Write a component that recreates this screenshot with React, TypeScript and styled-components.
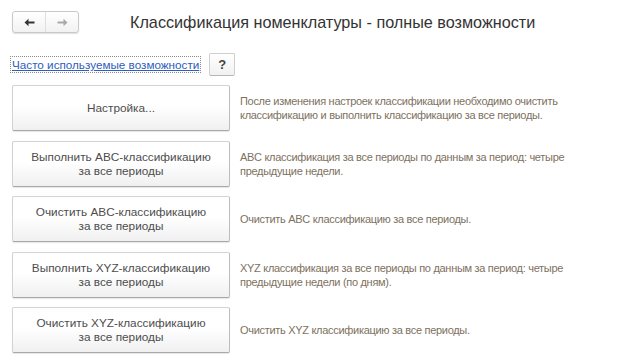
import styled, { createGlobalStyle } from "styled-components";

const GlobalStyle = createGlobalStyle`
    body {
        margin: 0;
        background: #ffffff;
        font-family: "Liberation Sans", Arial, sans-serif;
    }
`;

const Page = styled.div`
    width: 627px;
    height: 362px;
    padding: 11px 12px 0 12px;
    box-sizing: border-box;
    background: #ffffff;
`;

const Header = styled.div`
    display: flex;
    align-items: center;
    height: 22px;
    gap: 51px;
`;

const NavGroup = styled.div`
    display: flex;
    height: 22px;
    border: 1px solid #c9c9c9;
    border-radius: 3px;
    background: linear-gradient(#ffffff, #f2f2f2);
    box-shadow: 0 1px 1px rgba(0, 0, 0, 0.12);
    box-sizing: border-box;
`;

const NavButton = styled.div<{ $disabled?: boolean }>`
    width: 32px;
    display: flex;
    align-items: center;
    justify-content: center;
    color: ${(p) => (p.$disabled ? "#a9a9a9" : "#333333")};
    & + & {
        border-left: 1px solid #dedede;
    }
`;

const Title = styled.h1`
    margin: 0;
    font-size: 16.2px;
    font-weight: normal;
    color: #333333;
`;

const LinkRow = styled.div`
    display: flex;
    align-items: center;
    gap: 10px;
    margin-top: 20px;
    height: 23px;
`;

const Link = styled.a`
    font-size: 11.7px;
    color: #2d5dc0;
    text-decoration: underline;
    outline: 1px dotted #8a8a8a;
    outline-offset: 1px;
`;

const HelpButton = styled.div`
    width: 26px;
    height: 23px;
    box-sizing: border-box;
    display: flex;
    align-items: center;
    justify-content: center;
    border: 1px solid #cfcfcf;
    border-bottom-color: #b5b5b5;
    border-radius: 2px;
    background: linear-gradient(#ffffff, #f1f1f1);
    font-size: 13px;
    font-weight: bold;
    color: #444444;
`;

const Actions = styled.div`
    margin-top: 9px;
    display: flex;
    flex-direction: column;
    gap: 9.5px;
`;

const Row = styled.div`
    display: grid;
    grid-template-columns: 218px 355px;
    gap: 10px;
    align-items: center;
`;

const ActionButton = styled.div`
    height: 46px;
    box-sizing: border-box;
    display: flex;
    align-items: center;
    justify-content: center;
    text-align: center;
    border: 1px solid #d3d3d3;
    border-bottom-color: #a9a9a9;
    border-right-color: #bdbdbd;
    border-radius: 2px;
    background: linear-gradient(#ffffff 45%, #f0f0f0);
    box-shadow: 0 1px 1px rgba(0, 0, 0, 0.1);
    font-size: 11.8px;
    line-height: 14px;
    color: #4d4d4d;
`;

const Description = styled.div`
    font-size: 11px;
    letter-spacing: -0.3px;
    line-height: 14px;
    color: #7d7160;
`;

const Arrow = ({ left }: { left?: boolean }) => (
    <svg width="11" height="9" viewBox="0 0 11 9">
        <path
            d={left ? "M0.5 4.5 L4.5 0.8 L4.5 3.5 L10.5 3.5 L10.5 5.5 L4.5 5.5 L4.5 8.2 Z" : "M10.5 4.5 L6.5 0.8 L6.5 3.5 L0.5 3.5 L0.5 5.5 L6.5 5.5 L6.5 8.2 Z"}
            fill="currentColor"
        />
    </svg>
);

const actions = [
    {
        label: ["Настройка..."],
        text: "После изменения настроек классификации необходимо очистить классификацию и выполнить классификацию за все периоды.",
    },
    {
        label: ["Выполнить ABC-классификацию", "за все периоды"],
        text: "ABC классификация за все периоды по данным за период: четыре предыдущие недели.",
    },
    {
        label: ["Очистить ABC-классификацию", "за все периоды"],
        text: "Очистить ABC классификацию за все периоды.",
    },
    {
        label: ["Выполнить XYZ-классификацию", "за все периоды"],
        text: "XYZ классификация за все периоды по данным за период: четыре предыдущие недели (по дням).",
    },
    {
        label: ["Очистить XYZ-классификацию", "за все периоды"],
        text: "Очистить XYZ классификацию за все периоды.",
    },
];

const App = () => {
    return (
        <>
            <GlobalStyle />
            <Page>
                <Header>
                    <NavGroup>
                        <NavButton>
                            <Arrow left />
                        </NavButton>
                        <NavButton $disabled>
                            <Arrow />
                        </NavButton>
                    </NavGroup>
                    <Title>Классификация номенклатуры - полные возможности</Title>
                </Header>
                <LinkRow>
                    <Link>Часто используемые возможности</Link>
                    <HelpButton>?</HelpButton>
                </LinkRow>
                <Actions>
                    {actions.map((a) => (
                        <Row key={a.text}>
                            <ActionButton>
                                <div>
                                    {a.label.map((l) => (
                                        <div key={l}>{l}</div>
                                    ))}
                                </div>
                            </ActionButton>
                            <Description>{a.text}</Description>
                        </Row>
                    ))}
                </Actions>
            </Page>
        </>
    );
};

export default App;
